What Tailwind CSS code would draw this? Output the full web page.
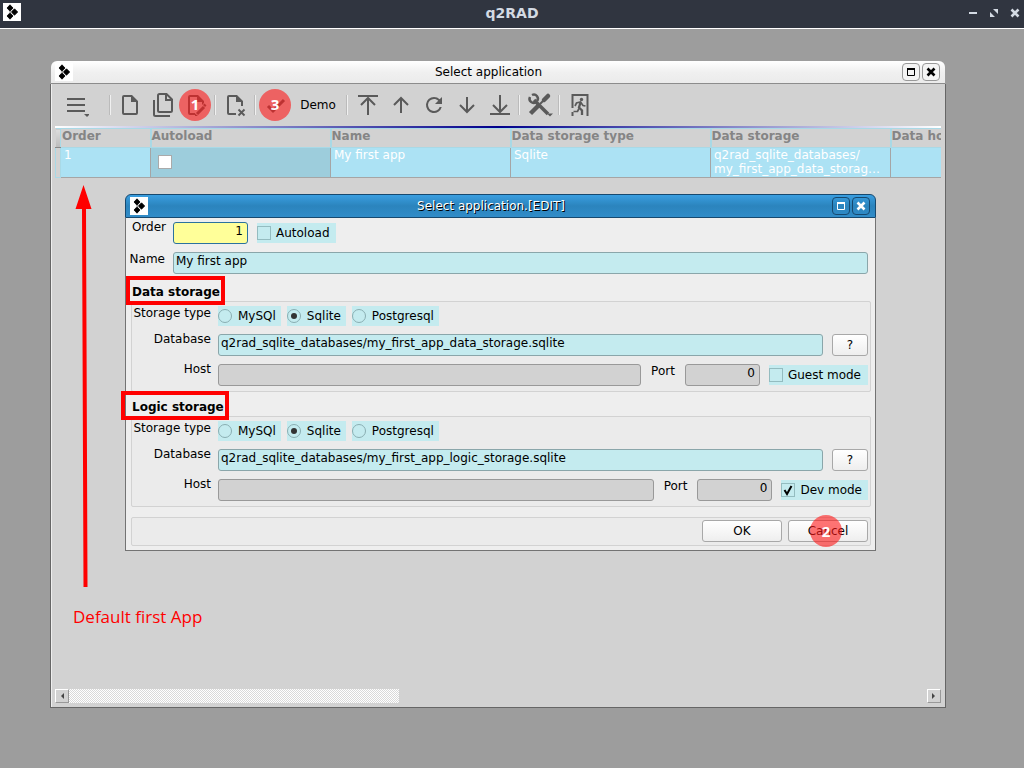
<!DOCTYPE html>
<html lang="en">
<head>
<meta charset="utf-8">
<meta name="viewport" content="width=device-width, initial-scale=1">
<title>q2RAD</title>
<script src="https://cdn.jsdelivr.net/npm/@tailwindcss/browser@4"></script>
</head>
<body class="flex min-h-screen flex-col bg-[#9d9d9d] font-['DejaVu_Sans',sans-serif] text-xs leading-4 text-black">

<svg class="hidden">
  <symbol id="logo" viewBox="0 0 18 18">
    <rect width="18" height="18" fill="#fff"/>
    <path d="M7 1.800 10 5 7 8.200 4 5zM11.500 5.800 14.700 9 11.500 12.200 8.300 9zM7 9.800 10 13 7 16.200 4 13z" fill="#000" stroke="#000" stroke-width=".8" stroke-linejoin="round"/>
    <path d="M6.500 8.500 9 9 6.500 10" fill="none" stroke="#888" stroke-width=".8"/>
  </symbol>
  <symbol id="max" viewBox="0 0 18 18"><path d="M5.500 6v6.500h7V6z" fill="none" stroke="currentColor"/><path d="M5 5h8v2H5z" fill="currentColor"/></symbol>
  <symbol id="close" viewBox="0 0 18 18"><path d="M5.500 5.500l7 7M12.500 5.500l-7 7" stroke="currentColor" stroke-width="2.600"/></symbol>
</svg>

<header class="flex h-[29px] shrink-0 items-start border-b border-white bg-[#303540] text-[#d3dae3]">
  <div class="flex h-[27px] w-full items-center pl-[3px]">
    <div class="flex-1 -mt-1"><svg class="size-[18px]"><use href="#logo"/></svg></div>
    <h1 class="mr-[3px] pb-0.5 text-sm font-bold">q2RAD</h1>
    <div class="flex flex-1 items-center justify-end gap-[3px] pb-0.5">
      <button aria-label="Minimize" class="size-[18px]"><svg viewBox="0 0 18 18"><path d="M5 8h8v2H5z" fill="currentColor"/></svg></button>
      <button aria-label="Restore" class="size-[18px]"><svg viewBox="0 0 18 18"><path d="M8 5h5v5zM5 8v5h5z" fill="currentColor"/></svg></button>
      <button aria-label="Close" class="size-[18px]"><svg viewBox="0 0 18 18"><use href="#close"/></svg></button>
    </div>
  </div>
</header>

<main class="relative flex-1">

  <!-- Select application window -->
  <section class="absolute top-8 right-[78px] bottom-[60px] left-[50px] flex flex-col">
    <div class="mx-px flex h-[23px] shrink-0 items-center rounded-t-md border-b border-[#8c8c8c] bg-linear-to-b from-white from-0% via-[#f0f0f0] via-50% to-[#ebebeb] to-100% pr-[5px] pl-1">
      <div class="flex-1"><svg class="size-[18px]"><use href="#logo"/></svg></div>
      <h2 class="mr-[18px]">Select application</h2>
      <div class="flex flex-1 justify-end gap-0.5">
        <button aria-label="Maximize" class="size-[18px] rounded border border-[#999] bg-[#f4f4f4]"><svg viewBox="1 1 16 16"><use href="#max" width="18" height="18"/></svg></button>
        <button aria-label="Close" class="size-[18px] rounded border border-[#999] bg-[#f4f4f4]"><svg viewBox="1 1 16 16"><use href="#close" width="18" height="18"/></svg></button>
      </div>
    </div>

    <div class="flex min-h-0 flex-1 flex-col border-x border-b border-[#666] bg-[#d2d2d2] px-1 pb-1 shadow-[inset_1px_0_0_#eee]">
      <!-- Toolbar -->
      <div class="flex h-[42px] shrink-0 items-center pl-1.5 text-[#5a5a5a]">
        <button aria-label="Menu" class="w-[47px] pl-1"><svg class="size-6" viewBox="0 0 24 24"><path d="M2 6h18M2 12h18M2 18h18" stroke="currentColor" stroke-width="2"/><path d="M19 21h6l-3 3z" fill="currentColor"/></svg></button>
        <div class="mr-0.5 ml-[-2px] h-5 w-[5px] border-r border-[#f0f0f0] shadow-[inset_-1px_0_0_#bbb]"></div>
        <button aria-label="New" class="flex w-[33px] justify-center"><svg class="size-6" viewBox="0 0 24 24"><path fill="currentColor" d="M14 2H6a2 2 0 0 0-2 2v16a2 2 0 0 0 2 2h12a2 2 0 0 0 2-2V8zM6 20V4h7v5h5v11z"/></svg></button>
        <button aria-label="Copy" class="flex w-[33px] justify-center"><svg class="size-6" viewBox="0 0 24 24" fill="none" stroke="currentColor" stroke-width="2"><path d="M15.500 1H8.500Q7 1 7 2.500v15Q7 19 8.500 19h11q1.500 0 1.500-1.500v-11zM15 1v6h6M3 7v14.500Q3 23 4.500 23H19"/></svg></button>
        <button aria-label="Edit" class="relative flex w-[33px] justify-center">
          <svg class="size-6" viewBox="0 0 24 24"><path fill="currentColor" d="M14 2H6a2 2 0 0 0-2 2v16a2 2 0 0 0 2 2h5v-2H6V4h7v5h5v3l2-2V8z"/><path d="M13 21l7-7" stroke="currentColor" stroke-width="3"/><path d="M20.500 10.500l2 2-1.500 1.500-2-2zM11 20.500V23h3z" fill="currentColor"/></svg>
          <span class="absolute -top-1 left-0 flex size-8 items-center justify-center rounded-full bg-[#ff1818]/60 pb-0.5 font-['Open_Sans',sans-serif] text-[15px] font-bold text-white">1</span>
        </button>
        <div class="mr-[3px] h-5 w-1 border-r border-[#f0f0f0] shadow-[inset_-1px_0_0_#bbb]"></div>
        <button aria-label="Delete" class="flex w-[33px] justify-center"><svg class="size-6" viewBox="0 0 24 24"><path fill="currentColor" d="M13 2H5a2 2 0 0 0-2 2v16a2 2 0 0 0 2 2h7v-2H5V4h7v5h5v4h2V8z"/><path d="M14.500 16.500l6 6M20.500 16.500l-6 6" stroke="currentColor" stroke-width="1.900"/></svg></button>
        <div class="mr-[3px] h-5 w-1 border-r border-[#f0f0f0] shadow-[inset_-1px_0_0_#bbb]"></div>
        <button aria-label="Select" class="relative flex w-[33px] justify-center">
          <svg class="size-6" viewBox="0 0 24 24"><path d="M4 13l5 5L20 7" fill="none" stroke="currentColor" stroke-width="3"/></svg>
          <span class="absolute -top-1 left-0 flex size-8 items-center justify-center rounded-full bg-[#ff1818]/60 pb-0.5 font-['Open_Sans',sans-serif] text-[15px] font-bold text-white">3</span>
        </button>
        <button class="w-[52px] text-center text-black">Demo</button>
        <div class="mr-[3px] h-5 w-1 border-r border-[#f0f0f0] shadow-[inset_-1px_0_0_#bbb]"></div>
        <button aria-label="First" class="flex w-[33px] justify-center"><svg class="size-6" viewBox="0 0 24 24" fill="none" stroke="currentColor" stroke-width="2"><path d="M2 3h20M12 22V5M5 12l7-7 7 7"/></svg></button>
        <button aria-label="Previous" class="flex w-[33px] justify-center"><svg class="size-6" viewBox="0 0 24 24" fill="none" stroke="currentColor" stroke-width="2"><path d="M12 20V5M5 12l7-7 7 7"/></svg></button>
        <button aria-label="Refresh" class="flex w-[33px] justify-center"><svg class="size-6" viewBox="0 0 24 24"><path fill="currentColor" d="M17.650 6.350A7.960 7.960 0 0 0 12 4a8 8 0 1 0 7.730 10h-2.080A6 6 0 1 1 12 6c1.660 0 3.140.690 4.220 1.780L13 11h7V4z"/></svg></button>
        <button aria-label="Next" class="flex w-[33px] justify-center"><svg class="size-6" viewBox="0 0 24 24" fill="none" stroke="currentColor" stroke-width="2"><path d="M12 4v15M5 12l7 7 7-7"/></svg></button>
        <button aria-label="Last" class="flex w-[33px] justify-center"><svg class="size-6" viewBox="0 0 24 24" fill="none" stroke="currentColor" stroke-width="2"><path d="M2 21h20M12 2v17M5 12l7 7 7-7"/></svg></button>
        <div class="mr-[3px] h-5 w-1 border-r border-[#f0f0f0] shadow-[inset_-1px_0_0_#bbb]"></div>
        <button aria-label="Tools" class="flex w-[33px] justify-center"><svg class="size-6 overflow-visible" viewBox="0 0 24 24" fill="none" stroke="currentColor"><path d="M6 7l14 14" stroke-width="3.600"/><path d="M2 4a4 4 0 0 0 6 5M4 2a4 4 0 0 1 5 6" stroke-width="2.500"/><path d="M12 11l5-5" stroke-width="2"/><path d="M16 7l4-4" stroke-width="4.500" stroke-linecap="round"/><path d="M2.500 20.500l8-8" stroke-width="4.500"/><path d="M19 20.500h6l-3 3z" fill="currentColor" stroke="none"/></svg></button>
        <div class="mr-[3px] h-5 w-1 border-r border-[#f0f0f0] shadow-[inset_-1px_0_0_#bbb]"></div>
        <button aria-label="Exit" class="flex w-[33px] justify-center"><svg class="size-6" viewBox="0 0 24 24" fill="none" stroke="currentColor"><path d="M4.500 15V2h15v21M4.500 19v4" stroke-width="2"/><circle cx="13.500" cy="6.500" r="1.700" fill="currentColor" stroke="none"/><path d="M12.500 9.500l-1.500 5 3 3v4.500" stroke-width="2.300"/><path d="M7 13l1.500-3 4-1 2.500 3.500 2.500.5M11 15.500l-1.500 3H5.500" stroke-width="1.700"/></svg></button>
      </div>

      <div class="h-0.5 shrink-0 bg-linear-to-r/srgb from-white via-[#00008b] to-white"></div>

      <!-- Application list -->
      <div class="min-h-0 flex-1 overflow-hidden">
        <table class="w-[1015px] table-fixed border-collapse text-left">
          <colgroup><col class="w-[5px]"><col class="w-[90px]"><col class="w-[180px]"><col class="w-[180px]"><col class="w-[200px]"><col class="w-[180px]"><col class="w-[180px]"></colgroup>
          <thead>
            <tr class="h-[19px] border-t border-b border-[#a9d9e6] align-top leading-[14px] text-[#858585]">
              <th class="border-b border-b-[#888] bg-linear-to-b from-[#ddd] to-[#bbb]"></th>
              <th class="border-l border-[#a9d9e6] pl-px">Order</th>
              <th class="border-l-2 border-[#a9d9e6]">Autoload</th>
              <th class="border-l-2 border-[#a9d9e6]">Name</th>
              <th class="border-l-2 border-[#a9d9e6]">Data storage type</th>
              <th class="border-l-2 border-[#a9d9e6]">Data storage</th>
              <th class="border-l-2 border-[#a9d9e6]">Data host</th>
            </tr>
          </thead>
          <tbody>
            <tr class="h-[30px] border-b border-[#a5a5a5] bg-[#ace2f4] align-top leading-[14px] text-white">
              <td class="border border-[#a9d9e6] bg-[#d2d2d2]"></td>
              <td class="pl-[3px]">1</td>
              <td class="border-l border-[#a5a5a5] bg-[#9dcddc] pt-[7px] pl-[7px]"><input type="checkbox" aria-label="Autoload" class="block size-3.5 appearance-none border border-[#aaa] bg-white"></td>
              <td class="border-l border-[#a5a5a5] pl-[3px]">My first app</td>
              <td class="border-l border-[#a5a5a5] pl-[3px]">Sqlite</td>
              <td class="border-l border-[#a5a5a5] pl-[3px]">q2rad_sqlite_databases/<br>my_first_app_data_storag…</td>
              <td class="border-l border-[#a5a5a5]"></td>
            </tr>
          </tbody>
        </table>
      </div>

      <!-- Horizontal scroll bar -->
      <div class="flex h-[15px] shrink-0 items-center">
        <button aria-label="Scroll left" class="flex size-3.5 items-center justify-center border border-t-white border-r-[#999] border-b-[#999] border-l-white"><svg class="size-2" viewBox="0 0 8 8"><path d="M6 1v6L3 4z" fill="#444"/></svg></button>
        <div class="flex h-3.5 flex-1"><div class="w-[330px] bg-[repeating-conic-gradient(#fff_0_25%,#d9d9d9_0_50%)] bg-size-[2px_2px]"></div></div>
        <button aria-label="Scroll right" class="flex size-3.5 items-center justify-center border border-t-white border-r-[#999] border-b-[#999] border-l-white"><svg class="size-2" viewBox="0 0 8 8"><path d="M2 1v6l3-3z" fill="#444"/></svg></button>
      </div>
    </div>
  </section>

  <!-- Edit dialog -->
  <section class="absolute top-[165px] right-[148px] left-[125px] flex flex-col">
    <div class="flex h-6 items-center rounded-t-md border border-[#17496f] bg-linear-to-b from-[#3a9ee0] via-[#2b84bd] via-50% to-[#318cc8] pr-[5px] pl-1 text-white">
      <div class="flex-1"><svg class="size-[18px]"><use href="#logo"/></svg></div>
      <h2 class="mr-[18px] [text-shadow:1px_1px_0_#000]">Select application.[EDIT]</h2>
      <div class="flex flex-1 justify-end gap-0.5">
        <button aria-label="Maximize" class="size-[18px] rounded border border-[#17496f]"><svg viewBox="1 1 16 16"><use href="#max" width="18" height="18"/></svg></button>
        <button aria-label="Close" class="size-[18px] rounded border border-[#17496f]"><svg viewBox="1 1 16 16"><use href="#close" width="18" height="18"/></svg></button>
      </div>
    </div>

    <form class="flex flex-col border-x border-b border-[#737373] bg-[#eee] pt-1 pb-1">
      <div class="flex h-[22px] pr-[7px]">
        <label for="order" class="mr-[7px] w-10 text-right leading-[10px]">Order</label>
        <input id="order" value="1" class="mr-[9px] w-[75px] rounded-[3px] border border-[#2b729e] bg-[#ffff99] pr-1 pb-1 text-right">
        <label class="flex h-5 items-center gap-[5px] self-center bg-[#c4ebef] pr-1.5"><input type="checkbox" class="size-3.5 appearance-none border border-[#94bcc0]">Autoload</label>
      </div>
      <div class="mt-2 flex h-[22px] pr-[7px]">
        <label for="name" class="mr-2 w-[39px] pt-px text-right leading-3">Name</label>
        <input id="name" value="My first app" class="min-w-0 flex-1 rounded-[3px] border border-[#8aa6aa] bg-[#c4ebef] pb-1 pl-0.5">
      </div>

      <div class="flex h-[27px] items-end px-1.5 pb-px">
        <h3 class="relative font-bold">Data storage<span class="absolute -top-2 -right-[5px] -bottom-[5px] -left-1.5 border-4 border-[#f00]"></span></h3>
      </div>
      <fieldset class="mr-1 ml-[5px] flex flex-col gap-2 rounded-xs border border-[#d2d2d2] bg-[#ebebeb] pt-1 pr-0.5 pb-[5px]">
        <div class="flex h-5 gap-1.5">
          <span class="mr-px w-[79px] pt-px text-right leading-3">Storage type</span>
          <label class="flex items-center gap-1.5 bg-[#c4ebef] pr-[5px]"><input type="radio" name="data" class="grid size-3.5 appearance-none place-items-center rounded-full border border-[#8aaeb2] before:size-1.5 before:rounded-full checked:before:bg-[#333]">MySQl</label>
          <label class="flex items-center gap-1.5 bg-[#c4ebef] pr-[5px]"><input type="radio" name="data" checked class="grid size-3.5 appearance-none place-items-center rounded-full border border-[#8aaeb2] before:size-1.5 before:rounded-full checked:before:bg-[#333]">Sqlite</label>
          <label class="flex items-center gap-1.5 bg-[#c4ebef] pr-[5px]"><input type="radio" name="data" class="grid size-3.5 appearance-none place-items-center rounded-full border border-[#8aaeb2] before:size-1.5 before:rounded-full checked:before:bg-[#333]">Postgresql</label>
        </div>
        <div class="flex h-[22px]">
          <label for="ddb" class="mr-[7px] w-[79px] text-right leading-[10px]">Database</label>
          <input id="ddb" value="q2rad_sqlite_databases/my_first_app_data_storage.sqlite" class="min-w-0 flex-1 rounded-[3px] border border-[#8aa6aa] bg-[#c4ebef] pb-1 pl-0.5">
          <button type="button" class="ml-[9px] w-9 rounded-[3px] border border-[#a8a8a8] bg-linear-to-b from-white to-[#eee]">?</button>
        </div>
        <div class="flex h-[22px]">
          <label for="dhost" class="mr-[7px] w-[79px] text-right leading-[10px]">Host</label>
          <input id="dhost" class="min-w-0 flex-1 rounded-[3px] border border-[#999] bg-[#d2d2d2]">
          <label for="dport" class="mx-2.5 pt-px leading-3">Port</label>
          <input id="dport" value="0" class="w-[75px] rounded-[3px] border border-[#999] bg-[#d2d2d2] pr-1 pb-1 text-right">
          <label class="ml-[9px] flex h-5 items-center gap-[5px] self-center bg-[#c4ebef] pr-[7px]"><input type="checkbox" class="size-3.5 appearance-none border border-[#94bcc0]">Guest mode</label>
        </div>
      </fieldset>

      <div class="flex h-6 items-end px-1.5 pb-px">
        <h3 class="relative font-bold">Logic storage<span class="absolute -top-2 -right-[5px] -bottom-[5px] -left-[11px] border-4 border-[#f00]"></span></h3>
      </div>
      <fieldset class="mr-1 ml-[5px] flex flex-col gap-2 rounded-xs border border-[#d2d2d2] bg-[#ebebeb] pt-1 pr-0.5 pb-[5px]">
        <div class="flex h-5 gap-1.5">
          <span class="mr-px w-[79px] pt-px text-right leading-3">Storage type</span>
          <label class="flex items-center gap-1.5 bg-[#c4ebef] pr-[5px]"><input type="radio" name="logic" class="grid size-3.5 appearance-none place-items-center rounded-full border border-[#8aaeb2] before:size-1.5 before:rounded-full checked:before:bg-[#333]">MySQl</label>
          <label class="flex items-center gap-1.5 bg-[#c4ebef] pr-[5px]"><input type="radio" name="logic" checked class="grid size-3.5 appearance-none place-items-center rounded-full border border-[#8aaeb2] before:size-1.5 before:rounded-full checked:before:bg-[#333]">Sqlite</label>
          <label class="flex items-center gap-1.5 bg-[#c4ebef] pr-[5px]"><input type="radio" name="logic" class="grid size-3.5 appearance-none place-items-center rounded-full border border-[#8aaeb2] before:size-1.5 before:rounded-full checked:before:bg-[#333]">Postgresql</label>
        </div>
        <div class="flex h-[22px]">
          <label for="ldb" class="mr-[7px] w-[79px] text-right leading-[10px]">Database</label>
          <input id="ldb" value="q2rad_sqlite_databases/my_first_app_logic_storage.sqlite" class="min-w-0 flex-1 rounded-[3px] border border-[#8aa6aa] bg-[#c4ebef] pb-1 pl-0.5">
          <button type="button" class="ml-[9px] w-9 rounded-[3px] border border-[#a8a8a8] bg-linear-to-b from-white to-[#eee]">?</button>
        </div>
        <div class="flex h-[22px]">
          <label for="lhost" class="mr-[7px] w-[79px] text-right leading-[10px]">Host</label>
          <input id="lhost" class="min-w-0 flex-1 rounded-[3px] border border-[#999] bg-[#d2d2d2]">
          <label for="lport" class="mx-2.5 pt-px leading-3">Port</label>
          <input id="lport" value="0" class="w-[75px] rounded-[3px] border border-[#999] bg-[#d2d2d2] pr-1 pb-1 text-right">
          <label class="relative ml-[9px] flex h-5 items-center gap-[5px] self-center bg-[#c4ebef] pr-1.5"><input type="checkbox" checked class="peer size-3.5 appearance-none border border-[#94bcc0]"><svg class="pointer-events-none absolute top-[3px] left-0 hidden size-3.5 peer-checked:block" viewBox="0 0 14 14"><path d="M3.500 7l2.500 4 4.500-8" fill="none" stroke="#000" stroke-width="2"/></svg>Dev mode</label>
        </div>
      </fieldset>

      <div class="mt-2.5 mr-1 ml-[5px] flex justify-end gap-1.5 rounded-xs border border-[#d2d2d2] bg-[#ebebeb] pt-0.5 pr-0.5 pb-[3px]">
        <button type="button" class="h-[22px] w-20 rounded-[3px] border border-[#a8a8a8] bg-linear-to-b from-white to-[#eee]">OK</button>
        <button type="button" class="relative h-[22px] w-20 rounded-[3px] border border-[#a8a8a8] bg-linear-to-b from-white to-[#eee]">Cancel<span class="absolute -top-[6px] left-[21px] flex size-8 items-center justify-center rounded-full bg-[#ff1818]/60 font-['Open_Sans',sans-serif] text-[15px] font-bold text-white">2</span></button>
      </div>
    </form>
  </section>

  <!-- Callout -->
  <div class="absolute top-[156px] left-[73px] text-[#f00]">
    <svg class="h-[402px] w-6" viewBox="0 0 24 402" fill="currentColor"><path d="M10.500 0 18.500 24H13l1.500 378h-4L9 24H2.500z"/></svg>
    <p class="mt-[18px] font-['Open_Sans',sans-serif] text-[17px] leading-6">Default first App</p>
  </div>
</main>
</body>
</html>
